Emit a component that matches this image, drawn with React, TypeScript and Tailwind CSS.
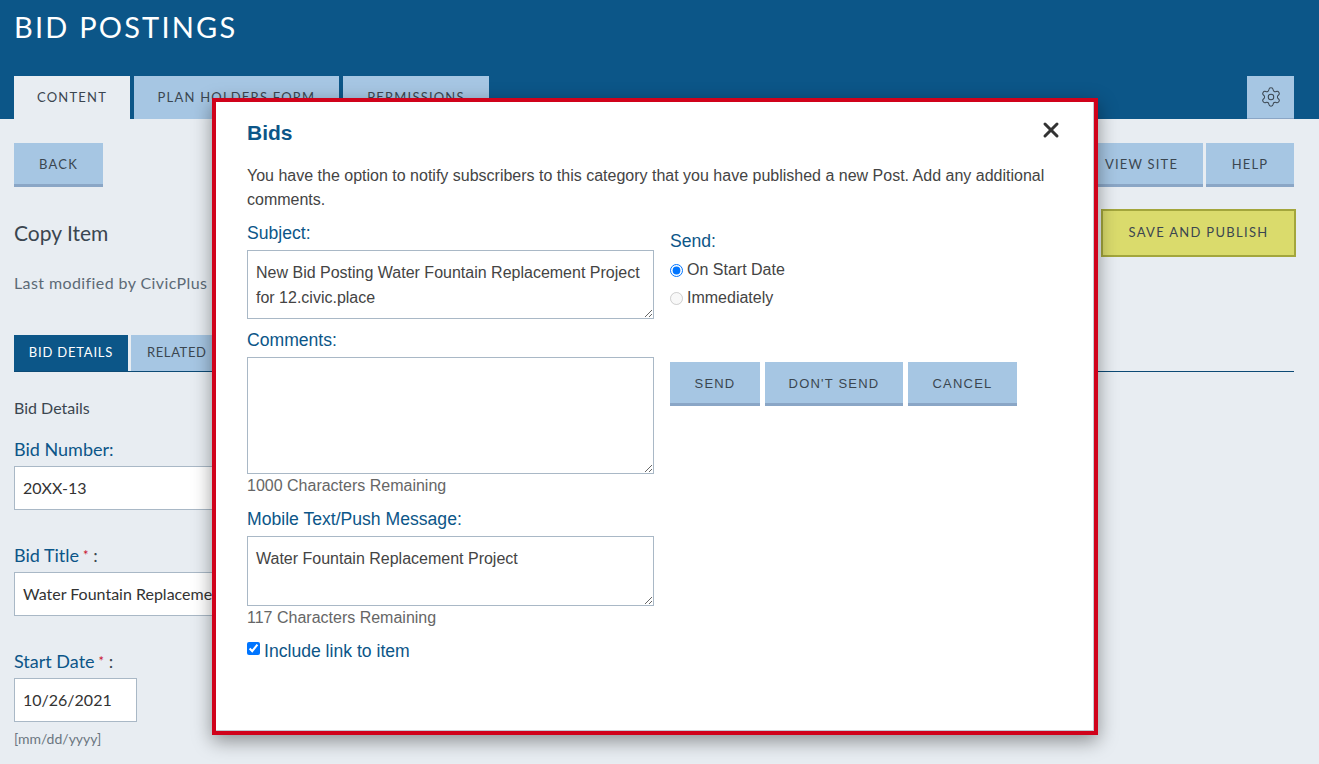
import { Settings, X } from 'lucide-react'

function BlueButton({ label, className = '' }: { label: string; className?: string }) {
  return (
    <div className={`flex items-center justify-center h-11 pt-[2px] bg-[#a6c6e3] border-b-[3px] border-[#8aa6c6] text-[13px] tracking-[1.2px] text-[#3b4650] ${className}`}>
      {label}
    </div>
  )
}

function Field({ label, value, required, className = '' }: { label: string; value: string; required?: boolean; className?: string }) {
  return (
    <div className={className}>
      <div className="text-[18px] leading-[24px] text-[#0c5688]">
        {label}
        {required && <span className="text-[#c8102e] text-[13px] ml-1 align-top">*</span>}
        {required && <span className="text-[#3b4650]"> :</span>}
      </div>
      <div className="mt-[5px] flex items-center h-[44px] bg-white border border-[#a9b8c6] px-2 text-[16px] text-[#333] whitespace-nowrap overflow-hidden">
        {value}
      </div>
    </div>
  )
}

function Modal() {
  const textareaCls = 'block w-[407px] border border-[#a9b8c6] bg-white px-2 pt-[9px] pb-2 text-[16px] leading-[25px] text-[#444] outline-none'
  const labelCls = 'text-[17.6px] leading-[22px] text-[#0c5688]'
  return (
    <div className="absolute left-[212px] top-[98px] w-[886px] h-[637px] border-[4px] border-[#d0021b] shadow-[0_6px_18px_rgba(0,0,0,0.4)] font-['Liberation_Sans',Arial,sans-serif]">
      <div className="h-full bg-white border-r border-b border-[#c3cad2] pl-[31px] pr-[30px] pt-[18px]">
        <div className="flex items-start justify-between">
          <div className="text-[21px] leading-[26px] font-bold text-[#0c5688]">Bids</div>
          <X className="w-[24px] h-[24px] text-[#333] mt-[-2px]" strokeWidth={3} />
        </div>
        <p className="mt-[18px] text-[16px] leading-[24px] text-[#444]">
          You have the option to notify subscribers to this category that you have published a new Post. Add any additional comments.
        </p>
        <div className="flex gap-[16px] mt-[10px]">
          <div className="w-[407px]">
            <div className={labelCls}>Subject:</div>
            <textarea readOnly className={`${textareaCls} h-[69px] mt-[6px]`} value={'New Bid Posting Water Fountain Replacement Project for 12.civic.place'} />
            <div className={`${labelCls} mt-[10px]`}>Comments:</div>
            <textarea readOnly className={`${textareaCls} h-[117px] mt-[6px]`} value="" />
            <div className="text-[16px] leading-[22px] text-[#666] mt-[1px]">1000 Characters Remaining</div>
            <div className={`${labelCls} mt-[11px]`}>Mobile Text/Push Message:</div>
            <textarea readOnly className={`${textareaCls} h-[70px] mt-[6px]`} value="Water Fountain Replacement Project" />
            <div className="text-[16px] leading-[22px] text-[#666] mt-[1px]">117 Characters Remaining</div>
            <label className={`flex items-start mt-[11px] ${labelCls}`}>
              <input type="checkbox" readOnly checked className="w-[13px] h-[13px] m-0 mt-[2px] mr-[4px]" />
              Include link to item
            </label>
          </div>
          <div className="pt-[8px]">
            <div className={labelCls}>Send:</div>
            <label className="flex items-center h-[28px] mt-[4px] text-[16px] text-[#444]">
              <input type="radio" name="send" readOnly checked className="w-[13px] h-[13px] m-0 mr-[4px]" />
              On Start Date
            </label>
            <label className="flex items-center h-[28px] text-[16px] text-[#444]">
              <input type="radio" name="send" disabled className="w-[13px] h-[13px] m-0 mr-[4px]" />
              Immediately
            </label>
            <div className="flex gap-[5px] mt-[50px]">
              <BlueButton label="SEND" className="w-[90px]" />
              <BlueButton label="DON'T SEND" className="w-[138px]" />
              <BlueButton label="CANCEL" className="w-[109px]" />
            </div>
          </div>
        </div>
      </div>
    </div>
  )
}

export default function App() {
  return (
    <div className="relative h-[764px] overflow-hidden bg-[#e8edf2] font-['Lato',sans-serif] text-[#3b4650]">
      <div className="h-[119px] bg-[#0c5688] px-[14px] flex flex-col justify-between">
        <div className="pt-[8px] text-[29px] leading-[38px] tracking-[2.2px] text-white">BID POSTINGS</div>
        <div className="flex items-end justify-between">
          <div className="flex gap-[4px]">
            <div className="w-[116px] h-[43px] flex items-center justify-center bg-[#e8edf2] text-[13px] tracking-[1.2px]">CONTENT</div>
            <div className="w-[205px] h-[43px] flex items-center justify-center bg-[#a6c6e3] text-[13px] tracking-[1.2px]">PLAN HOLDERS FORM</div>
            <div className="w-[146px] h-[43px] flex items-center justify-center bg-[#a6c6e3] text-[13px] tracking-[1.2px]">PERMISSIONS</div>
          </div>
          <div className="mr-[11px] w-[47px] h-[43px] flex items-center justify-center bg-[#a6c6e3] border-b border-[#8aa6c6]">
            <Settings className="w-[22px] h-[22px] text-[#3b4650]" strokeWidth={1.1} />
          </div>
        </div>
      </div>

      <div className="px-[14px] pr-[25px] relative">
        <div className="flex items-start justify-between pt-[24px]">
          <BlueButton label="BACK" className="w-[89px]" />
          <div className="flex flex-col items-end gap-[22px]">
            <div className="flex gap-[3px]">
              <BlueButton label="VIEW SITE" className="w-[120px] pr-[3px]" />
              <BlueButton label="HELP" className="w-[88px]" />
            </div>
            <div className="mr-[-2px] w-[195px] h-[48px] flex items-center justify-center bg-[#dadb6c] border-2 border-[#a3a63c] text-[13px] tracking-[1.3px] text-[#3b4650]">
              SAVE AND PUBLISH
            </div>
          </div>
        </div>

        <div className="mt-[-38px] text-[21px] leading-[28px] text-[#3b4650]">Copy Item</div>
        <div className="mt-[25px] text-[16px] tracking-[0.4px] leading-[22px] text-[#5c6a76]">Last modified by CivicPlus</div>

        <div className="mt-[41px] flex gap-[3px] border-b border-[#0c4a75] h-[37px]">
          <div className="w-[114px] flex items-center justify-center bg-[#0c5688] text-white text-[13px] tracking-[0.8px]">BID DETAILS</div>
          <div className="w-[140px] flex items-center pl-[16px] bg-[#a6c6e3] text-[13px] tracking-[0.6px]">RELATED</div>
        </div>

        <div className="mt-[25px] text-[16px] leading-[22px]">Bid Details</div>
        <Field label="Bid Number:" value="20XX-13" className="mt-[18px] w-[400px]" />
        <Field label="Bid Title" required value="Water Fountain Replacement Project" className="mt-[33px] w-[400px]" />
        <Field label="Start Date" required value="10/26/2021" className="mt-[33px] w-[123px]" />
        <div className="mt-[7px] text-[14px] leading-[20px] text-[#6b7680]">[mm/dd/yyyy]</div>
      </div>

      <Modal />
    </div>
  )
}
